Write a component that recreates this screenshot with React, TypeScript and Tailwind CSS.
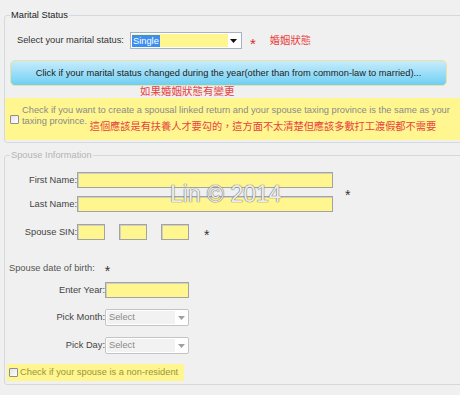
import React from 'react';

const Check = () => (
  <span className="w-[9px] h-[9px] shrink-0 border border-[#8e8e8e] rounded-[1px] bg-linear-to-br from-[#e4e4e4] to-white" />
);

const YellowInput = ({ className }: { className: string }) => (
  <div className={`h-[16px] bg-[#fff68f] border border-[#a3a3a3] shadow-[inset_1px_1px_0_#d0d0c0] ${className}`} />
);

const Arrow = ({ color }: { color: string }) => (
  <svg width="7" height="4" viewBox="0 0 7 4">
    <path d="M0 0h7L3.5 4z" fill={color} />
  </svg>
);

const Star = ({ className }: { className: string }) => (
  <span className={`text-[14px] leading-[11px] h-[11px] translate-y-[3px] ${className}`}>*</span>
);

const GraySelect = () => (
  <div className="w-[84px] h-[17px] flex border border-[#c4c4c4] rounded-[2px] bg-white p-[1px]">
    <div className="flex-1 bg-[#f2f2f2] text-[#8a8a8a] pl-[2px] leading-[13px]">Select</div>
    <div className="w-[12px] flex items-center justify-center">
      <Arrow color="#a0a0a0" />
    </div>
  </div>
);

const FormRow = ({ label, labelW, children }: { label: string; labelW: string; children: React.ReactNode }) => (
  <div className="flex items-center">
    <span className={`${labelW} text-right text-[#444]`}>{label}</span>
    {children}
  </div>
);

export default function App() {
  return (
    <div className="relative w-[460px] h-[395px] overflow-hidden bg-[#f0f0f0] text-[9.3px] leading-[11px] font-['Liberation_Sans','Noto_Sans_CJK_TC',sans-serif] text-[#222]">
      {/* Marital Status */}
      <fieldset className="ml-[4px] mt-[9px] w-[480px] border border-[#d3d9df] rounded-[3px] pb-[2px]">
        <legend className="ml-[5px] px-[1px] leading-[12px] text-[#222]">Marital Status</legend>

        <div className="flex items-center mt-[11px] pl-[12px]">
          <span className="text-[#333]">Select your marital status:</span>
          <div className="ml-[6px] w-[112px] h-[17px] flex border border-[#a9b3bf] bg-white p-[1px]">
            <div className="flex-1 bg-[#fff68f] flex items-center">
              <span className="bg-[#3b8ff0] text-white px-[1px] leading-[12px]">Single</span>
            </div>
            <div className="w-[12px] flex items-center justify-center">
              <Arrow color="#111" />
            </div>
          </div>
          <Star className="ml-[8px] text-[15px] text-[#d42a2a]" />
          <span className="ml-[14px] text-[10.3px] text-[#e8413f]">婚姻狀態</span>
        </div>

        <div className="ml-[5px] mt-[11px] w-[437px] h-[26px] rounded-[5px] border border-[#e8e2a6] bg-linear-to-b from-[#c6ecfb] to-[#6ccff3] flex items-center justify-center text-[#1c1c1c]">
          Click if your marital status changed during the year(other than from common-law to married)...
        </div>

        <div className="pl-[135px] text-[10.5px] leading-[10px] text-[#e8413f]">如果婚姻狀態有變更</div>

        <div className="mt-[2px] h-[42px] bg-[#fff68f] flex items-center pl-[5px] gap-[3px]">
          <Check />
          <p className="whitespace-nowrap text-[#8a8a8a] pb-[2px]">
            Check if you want to create a spousal linked return and your spouse taxing province is the same as your
            <br />
            taxing province.{' '}
            <span className="text-[10.2px] text-[#e8413f] align-[-6px]">
              這個應該是有扶養人才要勾的，這方面不太清楚但應該多數打工渡假都不需要
            </span>
          </p>
        </div>
      </fieldset>

      {/* Spouse Information */}
      <fieldset className="ml-[4px] mt-[6px] w-[480px] h-[236px] border border-[#d3d9df] rounded-[3px]">
        <legend className="ml-[5px] px-[1px] leading-[12px] text-[#b4b4b4]">Spouse Information</legend>

        <div className="flex items-center mt-[11px]">
          <div className="flex flex-col gap-[8px]">
            <FormRow label="First Name:" labelW="w-[72px]">
              <YellowInput className="w-[256px]" />
            </FormRow>
            <FormRow label="Last Name:" labelW="w-[72px]">
              <YellowInput className="w-[256px]" />
            </FormRow>
          </div>
          <Star className="ml-[12px] text-[#333]" />
        </div>

        <div className="flex items-center mt-[12px]">
          <FormRow label="Spouse SIN:" labelW="w-[72px]">
            <div className="flex gap-[14px]">
              <YellowInput className="w-[28px]" />
              <YellowInput className="w-[28px]" />
              <YellowInput className="w-[28px]" />
            </div>
          </FormRow>
          <Star className="ml-[15px] text-[#333]" />
        </div>

        <div className="flex items-center mt-[23px] pl-[4px]">
          <span className="text-[#555]">Spouse date of birth:</span>
          <Star className="ml-[10px] text-[#333]" />
        </div>

        <div className="flex flex-col gap-[11px] mt-[8px]">
          <FormRow label="Enter Year:" labelW="w-[100px]">
            <YellowInput className="w-[84px]" />
          </FormRow>
          <FormRow label="Pick Month:" labelW="w-[100px]">
            <GraySelect />
          </FormRow>
          <FormRow label="Pick Day:" labelW="w-[100px]">
            <GraySelect />
          </FormRow>
        </div>

        <div className="mt-[10px] ml-[2px] w-[177px] h-[17px] bg-[#fff68f] flex items-center pl-[2px] gap-[2px]">
          <Check />
          <span className="text-[#9b943c]">Check if your spouse is a non-resident</span>
        </div>
      </fieldset>

      {/* watermark */}
      <div className="absolute left-[170px] top-[182px] text-[23px] leading-[24px] font-light text-[#ececec] [text-shadow:0_0_1px_#555,0_0_1px_#777] pointer-events-none">
        Lin © 2014
      </div>
    </div>
  );
}
